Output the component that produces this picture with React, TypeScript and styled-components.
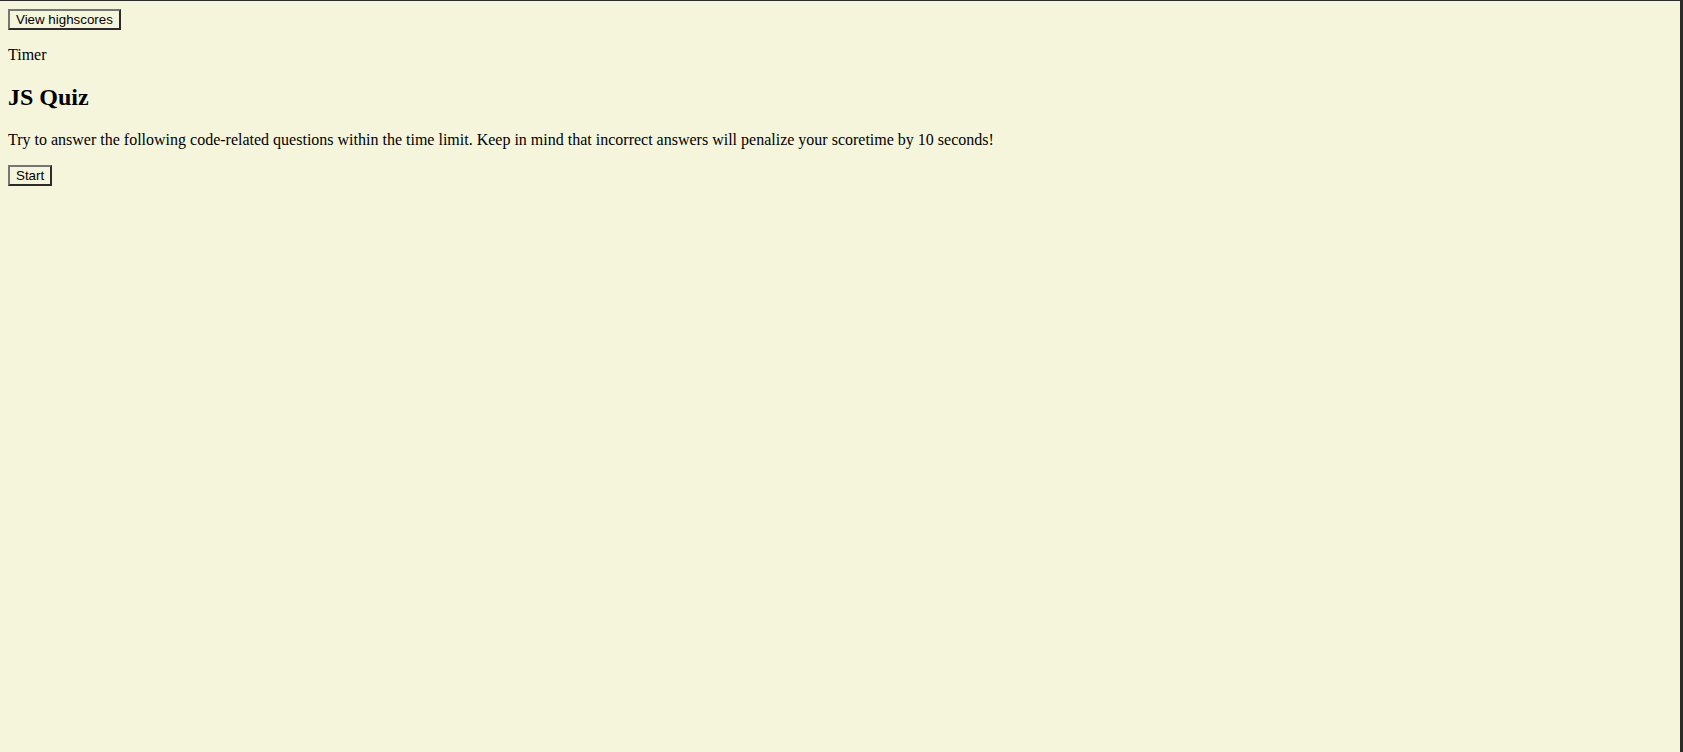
import React from "react";
import styled, { createGlobalStyle } from "styled-components";

const Global = createGlobalStyle`
  html {
    background: #f5f5dc;
    border-top: 1px solid #2b2b2b;
    border-right: 3px solid #2b2b2b;
    min-height: 100vh;
    box-sizing: border-box;
  }
  body {
    margin: 8px;
    font-family: "Liberation Serif", "Times New Roman", serif;
    font-size: 16px;
    color: #000;
  }
`;

const Page = styled.main`
  display: block;
`;

const Button = styled.button`
  font-family: "Liberation Sans", Arial, sans-serif;
  font-size: 13.333px;
  line-height: normal;
  color: #000;
  background: #f5f5dc;
  padding: 1px 6px;
  margin: 0;
  border-style: solid;
  border-width: 2px;
  border-color: #767676 #2b2b2b #2b2b2b #767676;
  cursor: pointer;
`;

const Text = styled.p`
  margin: 16px 0;
`;

const Title = styled.h2`
  font-size: 1.5em;
  font-weight: bold;
  margin: 0.83em 0;
`;

export default function App() {
  return (
    <>
      <Global />
      <Page>
        <Button>View highscores</Button>
        <Text>Timer</Text>
        <Title>JS Quiz</Title>
        <Text>
          Try to answer the following code-related questions within the time limit. Keep in mind
          that incorrect answers will penalize your scoretime by 10 seconds!
        </Text>
        <Button>Start</Button>
      </Page>
    </>
  );
}
